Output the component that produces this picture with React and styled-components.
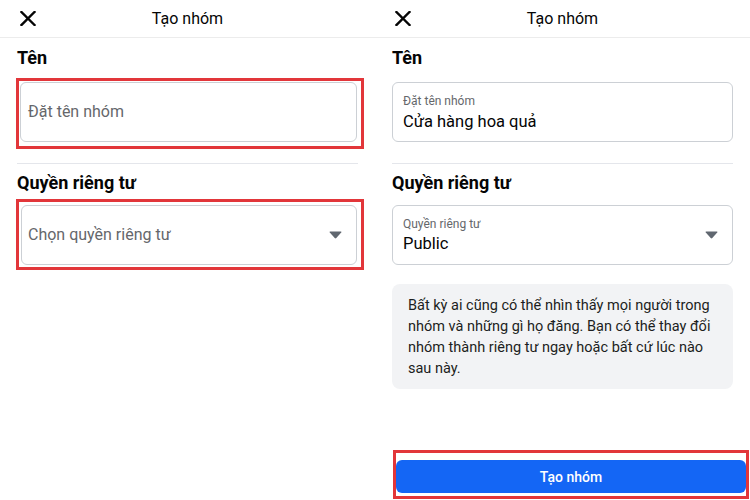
import React from "react";
import styled, { createGlobalStyle } from "styled-components";

const GlobalStyle = createGlobalStyle`
  html, body {
    margin: 0;
    padding: 0;
    background: #ffffff;
  }
  body {
    font-family: Roboto, "Noto Sans", "Liberation Sans", sans-serif;
    color: #050505;
  }
  *, *::before, *::after {
    box-sizing: border-box;
  }
`;

const Page = styled.div`
  display: flex;
  width: 750px;
  height: 500px;
  overflow: hidden;
`;

const Screen = styled.section`
  width: 375px;
  height: 500px;
  display: flex;
  flex-direction: column;
  background: #ffffff;
`;

const Header = styled.header`
  flex: none;
  height: 38px;
  display: grid;
  grid-template-columns: 56px 1fr 56px;
  align-items: center;
  border-bottom: 1px solid #ececec;
`;

const CloseButton = styled.button`
  border: 0;
  background: none;
  padding: 0 0 0 20px;
  height: 100%;
  display: flex;
  align-items: center;
  cursor: pointer;
`;

const Title = styled.h1`
  margin: 0;
  font-size: 16px;
  font-weight: 400;
  line-height: 20px;
  text-align: center;
  color: #050505;
`;

const Body = styled.div`
  flex: 1;
  display: flex;
  flex-direction: column;
  padding: 8px 17px 0;
`;

const SectionTitle = styled.h2`
  margin: ${(p) => p.$gap ?? 0}px 0 0;
  font-size: 18px;
  font-weight: 700;
  line-height: 24px;
  color: #050505;
`;

const Slot = styled.div`
  margin-top: ${(p) => p.$gap}px;
`;

const Highlight = styled.div`
  border: 3px solid #e2363a;
  margin: ${(p) => p.$bleed ?? "0"};
  padding: ${(p) => p.$inset ?? "0"};
`;

const Field = styled.div`
  position: relative;
  height: 60px;
  border: 1px solid #ccd0d5;
  border-radius: 6px;
  background: #ffffff;
  display: flex;
  flex-direction: column;
  justify-content: center;
  gap: ${(p) => p.$gap ?? 2}px;
  padding: 0 40px 0 ${(p) => p.$inset ?? 10}px;
`;

const Placeholder = styled.span`
  font-size: 16px;
  line-height: 20px;
  color: #65676b;
`;

const FieldLabel = styled.span`
  font-size: 12px;
  line-height: 16px;
  color: #65676b;
`;

const FieldValue = styled.span`
  font-size: 16.5px;
  line-height: 20px;
  color: #050505;
`;

const Caret = styled.svg`
  position: absolute;
  right: 14px;
  top: 50%;
  margin-top: -4px;
`;

const Divider = styled.hr`
  margin: 21px 0 0;
  border: 0;
  height: 1px;
  background: #e4e6eb;
`;

const Note = styled.p`
  margin: 19px 0 0;
  padding: 11px 16px 10px;
  border-radius: 8px;
  background: #f2f3f5;
  font-size: 14.5px;
  line-height: 21px;
  color: #1c1e21;
`;

const Footer = styled.div`
  margin-top: auto;
  padding: 0 1px 1px 18px;
`;

const PrimaryButton = styled.button`
  display: block;
  width: 100%;
  height: 33px;
  border: 0;
  border-radius: 6px;
  background: #1466f5;
  color: #ffffff;
  font-family: Roboto, "Noto Sans", sans-serif;
  font-size: 14px;
  font-weight: 500;
  cursor: pointer;
`;

function CloseIcon() {
  return (
    <svg width="16" height="15" viewBox="0 0 16 15" aria-hidden="true">
      <path
        d="M1.5 1 L14.5 14 M14.5 1 L1.5 14"
        stroke="#050505"
        strokeWidth="2.4"
        strokeLinecap="square"
        fill="none"
      />
    </svg>
  );
}

function DropCaret() {
  return (
    <Caret width="13" height="8" viewBox="0 0 13 8" aria-hidden="true">
      <path
        d="M1.2 0.6 H11.8 Q12.9 0.6 12.2 1.5 L7.3 7 Q6.5 7.8 5.7 7 L0.8 1.5 Q0.1 0.6 1.2 0.6 Z"
        fill="#606770"
      />
    </Caret>
  );
}

function TopBar() {
  return (
    <Header>
      <CloseButton aria-label="Đóng">
        <CloseIcon />
      </CloseButton>
      <Title>Tạo nhóm</Title>
      <span />
    </Header>
  );
}

function EmptyForm() {
  return (
    <Screen>
      <TopBar />
      <Body>
        <SectionTitle>Tên</SectionTitle>
        <Slot $gap={12}>
          <Highlight $bleed="-4px -6px -7px -1px" $inset="1px 4px 4px 1px">
            <Field $inset={7}>
              <Placeholder>Đặt tên nhóm</Placeholder>
            </Field>
          </Highlight>
        </Slot>
        <Divider />
        <SectionTitle $gap={7}>Quyền riêng tư</SectionTitle>
        <Slot $gap={10}>
          <Highlight $bleed="-6px -6px -5px -1px" $inset="3px 4px 2px 2px">
            <Field $inset={6}>
              <Placeholder>Chọn quyền riêng tư</Placeholder>
              <DropCaret />
            </Field>
          </Highlight>
        </Slot>
      </Body>
    </Screen>
  );
}

function FilledForm() {
  return (
    <Screen>
      <TopBar />
      <Body>
        <SectionTitle>Tên</SectionTitle>
        <Slot $gap={12}>
          <Field $gap={3}>
            <FieldLabel>Đặt tên nhóm</FieldLabel>
            <FieldValue>Cửa hàng hoa quả</FieldValue>
          </Field>
        </Slot>
        <Divider />
        <SectionTitle $gap={7}>Quyền riêng tư</SectionTitle>
        <Slot $gap={10}>
          <Field>
            <FieldLabel>Quyền riêng tư</FieldLabel>
            <FieldValue>Public</FieldValue>
            <DropCaret />
          </Field>
        </Slot>
        <Note>
          Bất kỳ ai cũng có thể nhìn thấy mọi người trong nhóm và những gì họ
          đăng. Bạn có thể thay đổi nhóm thành riêng tư ngay hoặc bất cứ lúc
          nào sau này.
        </Note>
      </Body>
      <Footer>
        <Highlight $inset="7px 0 3px">
          <PrimaryButton>Tạo nhóm</PrimaryButton>
        </Highlight>
      </Footer>
    </Screen>
  );
}

export default function App() {
  return (
    <>
      <GlobalStyle />
      <Page>
        <EmptyForm />
        <FilledForm />
      </Page>
    </>
  );
}
